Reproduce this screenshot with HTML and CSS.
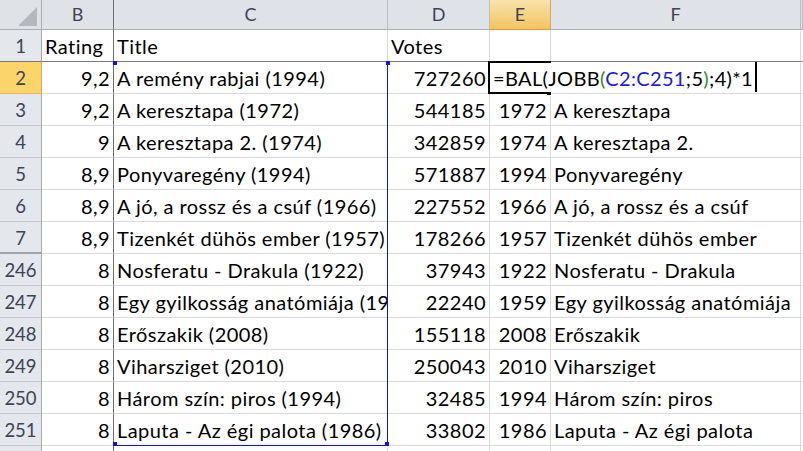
FILE: index.html
```html
<!DOCTYPE html>
<html lang="hu">
<head>
    <meta charset="UTF-8">
    <title>Munkafüzet</title>
    <link rel="stylesheet" href="styles.css">
</head>
<body>
    <div class="sheet">
        <!-- column headers -->
        <div class="corner"></div>
        <div class="ch fz">B</div>
        <div class="ch">C</div>
        <div class="ch">D</div>
        <div class="ch on">E</div>
        <div class="ch">F</div>
        <div class="ch"></div>

        <div class="rh top">1</div>
        <div class="c top fz">Rating</div>
        <div class="c top">Title</div>
        <div class="c top">Votes</div>
        <div class="c top"></div>
        <div class="c top"></div>
        <div class="c top"></div>

        <div class="rh on">2</div>
        <div class="c n fz">9,2</div>
        <div class="c">A remény rabjai (1994)</div>
        <div class="c n">727260</div>
        <div class="c"></div>
        <div class="c"></div>
        <div class="c"></div>

        <div class="rh">3</div>
        <div class="c n fz">9,2</div>
        <div class="c">A keresztapa (1972)</div>
        <div class="c n">544185</div>
        <div class="c n">1972</div>
        <div class="c">A keresztapa</div>
        <div class="c"></div>

        <div class="rh">4</div>
        <div class="c n fz">9</div>
        <div class="c">A keresztapa 2. (1974)</div>
        <div class="c n">342859</div>
        <div class="c n">1974</div>
        <div class="c">A keresztapa 2.</div>
        <div class="c"></div>

        <div class="rh">5</div>
        <div class="c n fz">8,9</div>
        <div class="c">Ponyvaregény (1994)</div>
        <div class="c n">571887</div>
        <div class="c n">1994</div>
        <div class="c">Ponyvaregény</div>
        <div class="c"></div>

        <div class="rh">6</div>
        <div class="c n fz">8,9</div>
        <div class="c">A jó, a rossz és a csúf (1966)</div>
        <div class="c n">227552</div>
        <div class="c n">1966</div>
        <div class="c">A jó, a rossz és a csúf</div>
        <div class="c"></div>

        <div class="rh hid">7</div>
        <div class="c n fz">8,9</div>
        <div class="c">Tizenkét dühös ember (1957)</div>
        <div class="c n">178266</div>
        <div class="c n">1957</div>
        <div class="c">Tizenkét dühös ember</div>
        <div class="c"></div>

        <div class="rh">246</div>
        <div class="c n fz">8</div>
        <div class="c">Nosferatu - Drakula (1922)</div>
        <div class="c n">37943</div>
        <div class="c n">1922</div>
        <div class="c">Nosferatu - Drakula</div>
        <div class="c"></div>

        <div class="rh">247</div>
        <div class="c n fz">8</div>
        <div class="c">Egy gyilkosság anatómiája (1959)</div>
        <div class="c n">22240</div>
        <div class="c n">1959</div>
        <div class="c">Egy gyilkosság anatómiája</div>
        <div class="c"></div>

        <div class="rh">248</div>
        <div class="c n fz">8</div>
        <div class="c">Erőszakik (2008)</div>
        <div class="c n">155118</div>
        <div class="c n">2008</div>
        <div class="c">Erőszakik</div>
        <div class="c"></div>

        <div class="rh">249</div>
        <div class="c n fz">8</div>
        <div class="c">Viharsziget (2010)</div>
        <div class="c n">250043</div>
        <div class="c n">2010</div>
        <div class="c">Viharsziget</div>
        <div class="c"></div>

        <div class="rh">250</div>
        <div class="c n fz">8</div>
        <div class="c">Három szín: piros (1994)</div>
        <div class="c n">32485</div>
        <div class="c n">1994</div>
        <div class="c">Három szín: piros</div>
        <div class="c"></div>

        <div class="rh">251</div>
        <div class="c n fz">8</div>
        <div class="c">Laputa - Az égi palota (1986)</div>
        <div class="c n">33802</div>
        <div class="c n">1986</div>
        <div class="c">Laputa - Az égi palota</div>
        <div class="c"></div>

        <div class="rh"></div>
        <div class="c fz"></div>
        <div class="c"></div>
        <div class="c"></div>
        <div class="c"></div>
        <div class="c"></div>
        <div class="c"></div>

        <!-- C2:C251 reference range -->
        <div class="range"></div>
        <div class="knob k1"></div>
        <div class="knob k2"></div>
        <div class="knob k3"></div>
        <div class="knob k4"></div>

        <!-- active cell E2, in edit mode -->
        <div class="active"></div>
        <div class="handle"></div>
        <div class="edit">
            <span class="etext">=BAL(JOBB<span class="par">(</span><span class="ref">C2:C251</span>;5<span class="par">)</span>;4)*1</span>
            <span class="caret"></span>
        </div>
    </div>
</body>
</html>
```

FILE: styles.css
```css
* {
    box-sizing: border-box;
}
body {
    margin: 0;
    background: #fff;
    font-family: 'Lato', 'Open Sans', sans-serif;
    overflow: hidden;
}
.sheet {
    position: relative;
    display: grid;
    grid-template-columns: 42px 72px 274px 102px 61px 250px 2px;
    grid-template-rows: 30px;
    grid-auto-rows: 32px;
    width: 803px;
    height: 451px;
    overflow: hidden;
}

/* headers */
.corner {
    position: relative;
    background: #dfe3e8;
    border-right: 1px solid #a9aeb5;
    border-bottom: 1px solid #a9aeb5;
}
.corner::after {
    content: '';
    position: absolute;
    right: 4px;
    bottom: 3px;
    width: 19px;
    height: 19px;
    background: #b4b8be;
    clip-path: polygon(100% 0, 100% 100%, 0 100%);
}
.ch {
    background: #dfe3e8;
    border-right: 1px solid #b9bec5;
    border-bottom: 1px solid #a9aeb5;
    color: #3b4555;
    font-size: 18px;
    line-height: 29px;
    text-align: center;
}
.ch.on {
    background: linear-gradient(#f9e3ad, #f2c45f);
    border-right-color: #e3a74a;
    border-bottom-color: #d99a3c;
}
.rh {
    background: #e4e7ec;
    border-right: 1px solid #a4a9b0;
    border-bottom: 1px solid #c3c7cd;
    color: #3b4555;
    font-size: 18.5px;
    line-height: 31px;
    padding-top: 1px;
    text-align: center;
}
.rh.on {
    background: #fbd46a;
    border-right-color: #e3a74a;
    border-bottom-color: #e2b35a;
}
.rh.hid {
    border-bottom: 2px solid #9ea3aa;
}

/* cells */
.c {
    border-right: 1px solid #d9d9d9;
    border-bottom: 1px solid #d9d9d9;
    color: #000;
    font-size: 20px;
    letter-spacing: 0.45px;
    line-height: 31px;
    padding: 1px 3px 0 3px;
    white-space: nowrap;
    overflow: hidden;
}
.n {
    text-align: right;
}
.fz,
.ch.fz {
    border-right-color: #6f6f6f;
}
.top,
.rh.top {
    border-bottom-color: #7b7b7b;
}

/* formula reference outline */
.range {
    position: absolute;
    left: 113px;
    top: 61px;
    width: 275px;
    height: 385px;
    border-right: 1px solid #1010f0;
    border-bottom: 1px solid #1010f0;
}
.knob {
    position: absolute;
    width: 4px;
    height: 4px;
    background: #1010f0;
}
.k1 { left: 113px; top: 61px; }
.k2 { left: 386px; top: 61px; }
.k3 { left: 113px; top: 442px; }
.k4 { left: 385px; top: 442px; }

/* active cell */
.active {
    position: absolute;
    left: 488px;
    top: 61px;
    width: 63px;
    height: 33px;
    border: 2px solid #000;
}
.handle {
    position: absolute;
    left: 547px;
    top: 91px;
    width: 5px;
    height: 5px;
    background: #000;
    border: 1px solid #fff;
    border-top: none;
    border-left: none;
}
.edit {
    position: absolute;
    left: 490px;
    top: 63px;
    height: 29px;
    display: flex;
    background: #fff;
    padding-left: 3px;
    padding-right: 8px;
    font-size: 20px;
    letter-spacing: 0.35px;
}
.etext {
    line-height: 28px;
    padding-top: 1px;
    white-space: nowrap;
}
.par {
    color: #2f8a2a;
}
.ref {
    color: #1a1ae6;
}
.caret {
    width: 2px;
    height: 30px;
    margin-top: -1px;
    margin-left: 2px;
    background: #000;
}
```
